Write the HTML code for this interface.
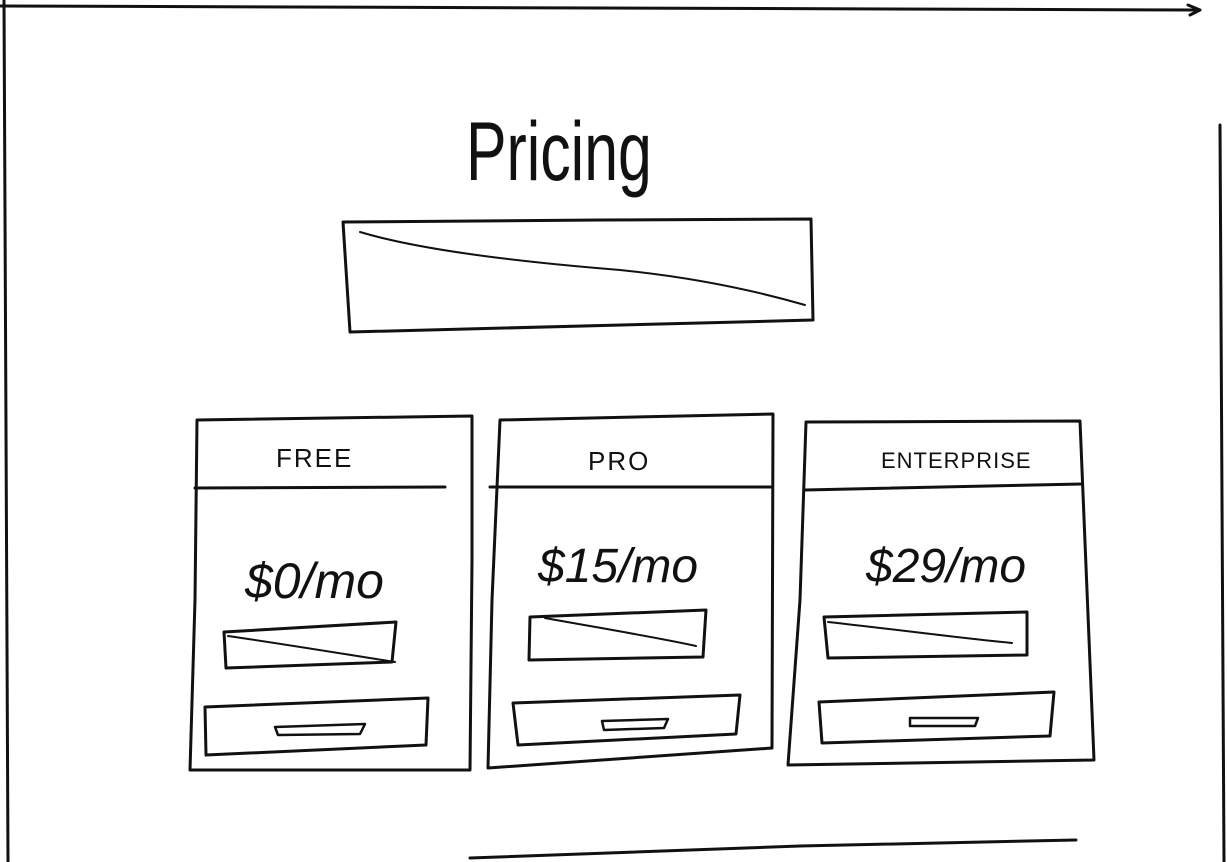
<!DOCTYPE html>
<html><head><meta charset="utf-8"><style>
html,body{margin:0;padding:0;background:#fff;width:1227px;height:862px;overflow:hidden}
svg{display:block}
text{font-family:"Liberation Sans",sans-serif;fill:#111}
</style></head><body>
<svg width="1227" height="862" viewBox="0 0 1227 862" fill="none" stroke="#111" stroke-width="3" stroke-linecap="round" stroke-linejoin="round">
<path d="M0 6 L600 8 L1198 10"/>
<path d="M1188 5 L1200 10 L1190 15"/>
<path d="M4 0 L6 430 L8 862"/>
<path d="M1220 125 L1222 500 L1224 862"/>
<path d="M470 858 L800 846 L1076 840"/>
<text x="0" y="0" font-size="76" stroke="none" transform="translate(466,180) scale(0.8,1.1)">Pricing</text>
<path d="M343 222 L600 220 L811 219 L813 320 L700 323 L350 332 L343 222"/>
<path d="M360 232 C420 250 520 262 620 270 C700 278 760 292 805 305" stroke-width="2"/>
<path d="M197 420 L472 416 L472 560 L470 770 L190 770 L195 600 L197 420"/>
<path d="M195 488 L445 487"/>
<text x="276" y="467" font-size="26" stroke="none" style="letter-spacing:2px">FREE</text>
<text x="245" y="598" font-size="50" stroke="none" font-style="italic">$0/mo</text>
<path d="M224 632 L396 622 L392 662 L226 668 Z"/>
<path d="M228 636 C290 645 350 655 395 662" stroke-width="2"/>
<path d="M205 707 L428 698 L426 745 L206 755 Z"/>
<path d="M275 727 L365 724 L360 734 L278 735 Z" stroke-width="2.5"/>
<path d="M500 420 L773 414 L772 748 L488 768 L492 600 L500 420"/>
<path d="M490 487 L772 487"/>
<text x="588" y="470" font-size="26" stroke="none" style="letter-spacing:2px">PRO</text>
<text x="538" y="582" font-size="48" stroke="none" font-style="italic">$15/mo</text>
<path d="M530 617 L706 610 L703 657 L529 660 Z"/>
<path d="M545 618 C600 628 660 638 696 646" stroke-width="2"/>
<path d="M513 703 L740 695 L736 734 L518 745 Z"/>
<path d="M602 721 L668 719 L664 728 L604 730 Z" stroke-width="2.5"/>
<path d="M806 422 L1080 421 L1094 760 L788 765 L800 600 L806 422"/>
<path d="M805 490 L1082 484"/>
<text x="881" y="468" font-size="22" stroke="none" style="letter-spacing:1px">ENTERPRISE</text>
<text x="866" y="582" font-size="48" stroke="none" font-style="italic">$29/mo</text>
<path d="M824 617 L1027 612 L1027 655 L828 658 Z"/>
<path d="M828 622 C900 630 960 638 1012 643" stroke-width="2"/>
<path d="M819 702 L1054 692 L1050 736 L822 743 Z"/>
<path d="M910 718 L978 718 L975 726 L910 726 Z" stroke-width="2.5"/>
</svg>
</body></html>
